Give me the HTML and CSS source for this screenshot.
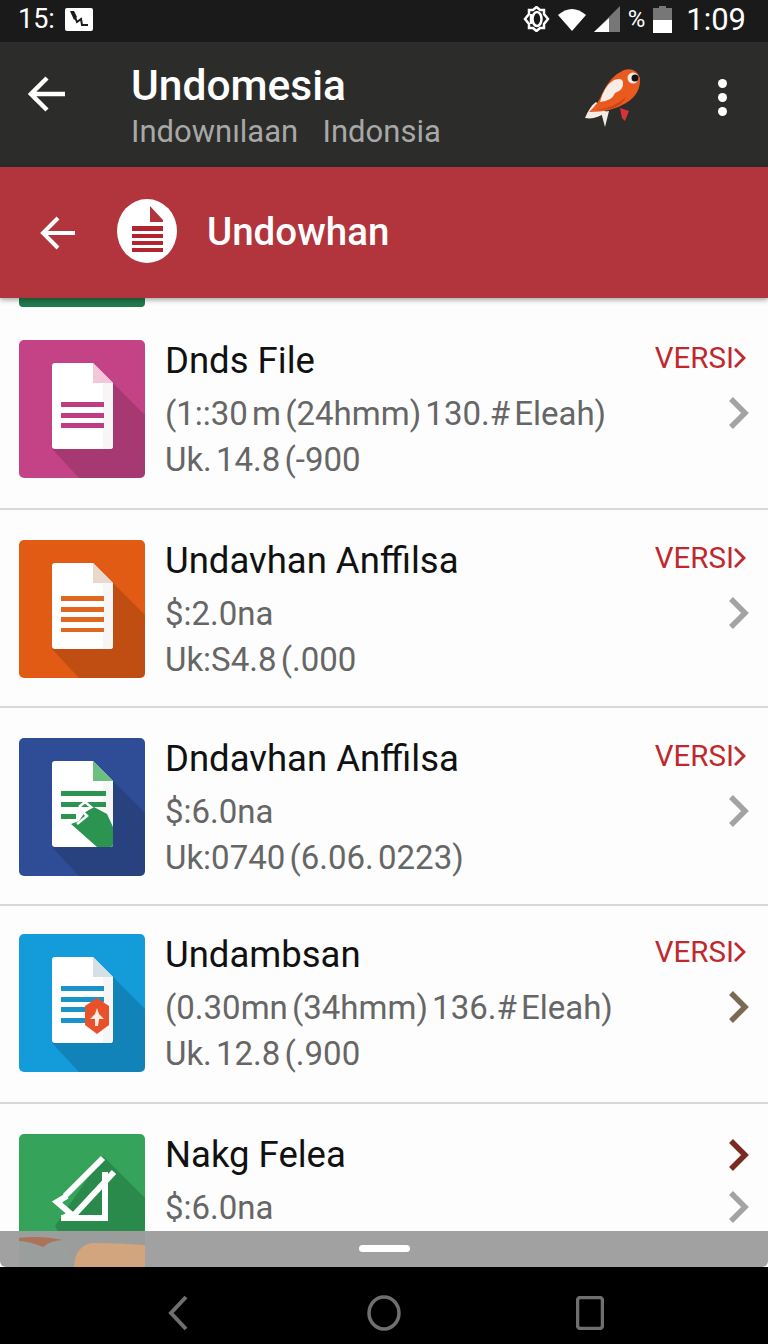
FILE: index.html
```html
<!DOCTYPE html>
<html lang="en">
<head>
    <meta charset="UTF-8">
    <meta name="viewport" content="width=device-width, initial-scale=1.0">
    <title>Undomesia</title>
    <link rel="stylesheet" href="styles.css">
</head>
<body>
    <svg class="defs" width="0" height="0">
        <defs>
            <symbol id="doc-page" viewBox="0 0 126 138">
                <path d="M94 43 L126 75 V134 a4 4 0 0 1 -4 4 H60 L33 109 Z" fill="#000" fill-opacity=".15"/>
                <path d="M36 23 H74 L94 43 V106 a3 3 0 0 1 -3 3 H36 a3 3 0 0 1 -3 -3 V26 a3 3 0 0 1 3 -3 Z" fill="#fff"/>
                <path d="M84 43 H94 V106 a3 3 0 0 1 -3 3 H84 Z" fill="#f6f6f6"/>
            </symbol>
            <symbol id="chev" viewBox="0 0 22 34">
                <path d="M4 3 L18 17 L4 31" fill="none" stroke="currentColor" stroke-width="5.5"/>
            </symbol>
        </defs>
    </svg>

    <div class="status-bar">
        <div class="status-left">
            <span>15:</span>
            <svg width="28" height="23" viewBox="0 0 28 23">
                <rect width="28" height="23" rx="2" fill="#fff"/>
                <path d="M8 4 L12 14 L16 11 L17 17 H23" fill="none" stroke="#1a1a1a" stroke-width="2"/>
                <path d="M5 3 H9 L12 9 L9 12 Z" fill="#1a1a1a"/>
            </svg>
        </div>
        <div class="status-right">
            <svg width="27" height="26" viewBox="0 0 27 26">
                <path d="M13.500 1 L17 4 H21 V8 L25 13 L21 18 V22 H17 L13.500 25 L10 22 H6 V18 L2 13 L6 8 V4 H10 Z" fill="none" stroke="#fff" stroke-width="2.500"/>
                <ellipse cx="14" cy="13" rx="4.500" ry="7" fill="none" stroke="#fff" stroke-width="2.500"/>
                <path d="M8 8 V18" stroke="#fff" stroke-width="2.500"/>
            </svg>
            <svg width="28" height="24" viewBox="0 0 28 24">
                <path d="M0 8 Q14 -4 28 8 L14 24 Z" fill="#fff"/>
            </svg>
            <svg width="26" height="26" viewBox="0 0 26 26">
                <path d="M26 0 V26 H0 Z" fill="#777"/>
                <path d="M15 12 V26 H0 Z" fill="#fff"/>
            </svg>
            <span class="status-pct">%</span>
            <svg width="19" height="27" viewBox="0 0 19 27">
                <path d="M6 0 H13 V2 H19 V27 H0 V2 H6 Z" fill="#777"/>
                <rect y="14" width="19" height="13" fill="#fff"/>
            </svg>
            <span class="status-time">1:09</span>
        </div>
    </div>

    <header class="app-bar">
        <svg class="app-back" width="38" height="36" viewBox="0 0 38 36">
            <path d="M19 2 L3 18 L19 34 M3 18 H37" fill="none" stroke="#fff" stroke-width="4.500"/>
        </svg>
        <div class="app-titles">
            <div class="app-title">Undomesia</div>
            <div class="app-sub">Indownılaan  Indonsia</div>
        </div>
        <svg class="fish" width="58" height="60" viewBox="0 0 58 60">
            <path d="M1 50 Q6 38 12 34 L22 44 Q12 52 1 50 Z" fill="#f4ebe4"/>
            <path d="M17 44 L21 59 L25 43 Z" fill="#f4ebe4"/>
            <path d="M36 40 L45 43 L41 53 L38 50 Z" fill="#d8323a"/>
            <path d="M5 44 Q14 36 18 26 Q26 8 40 2 Q52 -1 56 10 Q57 26 42 35 Q28 44 5 44 Z" fill="#ea5a1e"/>
            <path d="M16 34 Q20 18 30 12 Q38 9 39 14 Q40 22 31 25 Q28 33 16 34 Z" fill="#f7ede6"/>
            <path d="M12 42 Q30 40 42 29 Q36 42 12 42 Z" fill="#c9431a"/>
            <circle cx="49" cy="10" r="5.500" fill="#f7ede6"/>
            <circle cx="51" cy="10" r="3.500" fill="#111"/>
        </svg>
        <div class="dots"><i></i><i></i><i></i></div>
    </header>

    <div class="sub-bar">
        <svg class="sub-back" width="36" height="34" viewBox="0 0 36 34">
            <path d="M18 2 L3 17 L18 32 M3 17 H35" fill="none" stroke="#fff" stroke-width="4"/>
        </svg>
        <svg class="sub-icon" width="60" height="64" viewBox="0 0 60 64">
            <ellipse cx="30" cy="32" rx="30" ry="32" fill="#fff"/>
            <path d="M33 7 L46 21 V23 H33 Z" fill="#b2343c"/>
            <path d="M15 27 H46 V32 H15 Z M15 35 H46 V39 H15 Z M15 42 H46 V46 H15 Z M15 49 H46 V53 H15 Z" fill="#b2242e"/>
        </svg>
        <div class="sub-title">Undowhan</div>
    </div>

    <main class="list">
        <div class="peek"></div>

        <div class="row row-tight">
            <svg class="thumb" width="126" height="138" viewBox="0 0 126 138">
                <rect width="126" height="138" rx="5" fill="#c44387"/>
                <use href="#doc-page"/>
                <path d="M74 23 L94 43 H74 Z" fill="#f3c6da"/>
                <path d="M42 62 H85 V67 H42 Z M42 73 H85 V78 H42 Z M42 83 H85 V88 H42 Z" fill="#c03c82"/>
            </svg>
            <div class="info">
                <div class="name">Dnds File</div>
                <div class="line">(1::30 m (24hmm) 130.# Eleah)</div>
                <div class="line">Uk. 14.8 (-900</div>
            </div>
            <div class="side">
                <div class="versi">VERSI<svg width="12" height="22" viewBox="0 0 12 22"><path d="M1 2 L10 11 L1 20" fill="none" stroke="currentColor" stroke-width="2.800"/></svg></div>
                <svg class="go" width="22" height="34"><use href="#chev"/></svg>
            </div>
        </div>

        <div class="row">
            <svg class="thumb" width="126" height="138" viewBox="0 0 126 138">
                <rect width="126" height="138" rx="5" fill="#e25b14"/>
                <use href="#doc-page"/>
                <path d="M74 23 L94 43 H74 Z" fill="#e9d8ce"/>
                <path d="M42 56 H85 V61 H42 Z M42 67 H85 V72 H42 Z M42 77 H85 V82 H42 Z M42 88 H85 V92 H42 Z" fill="#e0671f"/>
            </svg>
            <div class="info">
                <div class="name">Undavhan Anffilsa</div>
                <div class="line">$:2.0na</div>
                <div class="line">Uk:S4.8 (.000</div>
            </div>
            <div class="side">
                <div class="versi">VERSI<svg width="12" height="22" viewBox="0 0 12 22"><path d="M1 2 L10 11 L1 20" fill="none" stroke="currentColor" stroke-width="2.800"/></svg></div>
                <svg class="go" width="22" height="34"><use href="#chev"/></svg>
            </div>
        </div>

        <div class="row">
            <svg class="thumb" width="126" height="138" viewBox="0 0 126 138">
                <rect width="126" height="138" rx="5" fill="#2f4d96"/>
                <use href="#doc-page"/>
                <path d="M74 23 L94 43 H74 Z" fill="#6cc07f"/>
                <path d="M42 53 H87 V58 H42 Z M42 64 H87 V69 H42 Z M42 76 H57 V81 H42 Z" fill="#2a9450"/>
                <path d="M52 86 L60 83 L66 74 L75 69 L88 76 L94 89 V106 a3 3 0 0 1 -3 3 H78 Z" fill="#2a9450"/>
                <path d="M60 69 L66 64 L72 69 L64 74 L68 78 L58 86" fill="none" stroke="#fff" stroke-width="2.500"/>
            </svg>
            <div class="info">
                <div class="name">Dndavhan Anffilsa</div>
                <div class="line">$:6.0na</div>
                <div class="line">Uk:0740 (6.06. 0223)</div>
            </div>
            <div class="side">
                <div class="versi">VERSI<svg width="12" height="22" viewBox="0 0 12 22"><path d="M1 2 L10 11 L1 20" fill="none" stroke="currentColor" stroke-width="2.800"/></svg></div>
                <svg class="go" width="22" height="34"><use href="#chev"/></svg>
            </div>
        </div>

        <div class="row row-tight">
            <svg class="thumb" width="126" height="138" viewBox="0 0 126 138">
                <rect width="126" height="138" rx="5" fill="#149bd9"/>
                <use href="#doc-page"/>
                <path d="M74 23 L94 43 H74 Z" fill="#d5dfe8"/>
                <path d="M42 52 H85 V57 H42 Z M42 63 H85 V68 H42 Z M42 73 H68 V78 H42 Z M42 84 H68 V89 H42 Z" fill="#1a94c8"/>
                <path d="M78 64 L90 72 V91 L78 100 L66 91 V72 Z" fill="#e8512a"/>
                <path d="M78 74 L80 80 L85 85 H80 L79 92 H76 L76 85 H71 L76 80 Z" fill="#fbeee6"/>
            </svg>
            <div class="info">
                <div class="name">Undambsan</div>
                <div class="line">(0.30mn (34hmm) 136.# Eleah)</div>
                <div class="line">Uk. 12.8 (.900</div>
            </div>
            <div class="side">
                <div class="versi">VERSI<svg width="12" height="22" viewBox="0 0 12 22"><path d="M1 2 L10 11 L1 20" fill="none" stroke="currentColor" stroke-width="2.800"/></svg></div>
                <svg class="go go-brown" width="22" height="34"><use href="#chev"/></svg>
            </div>
        </div>

        <div class="row">
            <svg class="thumb" width="126" height="138" viewBox="0 0 126 138">
                <rect width="126" height="138" rx="5" fill="#35a35a"/>
                <path d="M84 22 L126 64 V138 H60 L36 92 Z" fill="#2a8a4c"/>
                <path d="M84 24 L46 62 M95 38 L56 80 M86 38 V84 H42 M48 62 L38 68 L52 80 L44 84" fill="none" stroke="#fff" stroke-width="6"/>
            </svg>
            <div class="info">
                <div class="name">Nakg Felea</div>
                <div class="line">$:6.0na</div>
            </div>
            <div class="side">
                <div class="side-top"><svg class="go go-red" width="22" height="34"><use href="#chev"/></svg></div>
                <svg class="go go-low" width="22" height="34"><use href="#chev"/></svg>
            </div>
        </div>

        <div class="sheet">
            <svg class="sheet-art" width="126" height="36" viewBox="0 0 126 36">
                <path d="M0 7 Q20 4 44 9 Q30 10 24 16 Q10 10 0 10 Z" fill="#b06a48"/>
                <path d="M55 36 Q56 14 74 12 Q100 12 126 14 V36 Z" fill="#e0a878"/>
            </svg>
            <div class="handle"></div>
        </div>
    </main>

    <nav class="nav-bar">
        <svg width="22" height="36" viewBox="0 0 22 36">
            <path d="M19 2 L4 18 L19 34" fill="none" stroke="#6f6f6f" stroke-width="4"/>
        </svg>
        <svg width="34" height="36" viewBox="0 0 34 36">
            <ellipse cx="17" cy="18" rx="15" ry="16" fill="none" stroke="#6f6f6f" stroke-width="3.500"/>
        </svg>
        <svg width="28" height="34" viewBox="0 0 28 34">
            <rect x="1.500" y="1.500" width="25" height="31" rx="3" fill="none" stroke="#6f6f6f" stroke-width="3.500"/>
        </svg>
    </nav>
</body>
</html>
```

FILE: styles.css
```css
* {
    box-sizing: border-box;
}
html, body {
    margin: 0;
    padding: 0;
}
body {
    width: 768px;
    height: 1344px;
    display: flex;
    flex-direction: column;
    overflow: hidden;
    font-family: "Roboto", "Liberation Sans", sans-serif;
    background-color: #000;
}
.defs {
    display: none;
}

/* status bar */
.status-bar {
    height: 42px;
    flex: none;
    display: flex;
    align-items: center;
    justify-content: space-between;
    padding: 0 22px 4px 18px;
    background-color: #1a1a1a;
    color: #fff;
    font-size: 27px;
}
.status-left {
    display: flex;
    align-items: center;
    gap: 10px;
}
.status-right {
    display: flex;
    align-items: center;
    gap: 8px;
}
.status-pct {
    font-size: 24px;
}
.status-time {
    margin-left: 6px;
    font-size: 31px;
}

/* top bars */
.app-bar {
    height: 125px;
    flex: none;
    display: flex;
    align-items: flex-start;
    padding: 0 0 0 28px;
    background-color: #2c2c2a;
}
.app-back {
    flex: none;
    margin-top: 34px;
}
.app-titles {
    margin-left: 65px;
    flex: 1;
    margin-top: 20px;
}
.app-title {
    font-size: 42.5px;
    line-height: 48px;
    font-weight: 500;
    color: #fff;
}
.app-sub {
    font-size: 31px;
    line-height: 44px;
    word-spacing: 4.5px;
    color: #a8a8a8;
    white-space: pre;
}
.fish {
    flex: none;
    margin-top: 26px;
}
.dots {
    width: 9px;
    margin: 37px 41px 0 76px;
    display: flex;
    flex-direction: column;
    gap: 5px;
}
.dots i {
    display: block;
    width: 9px;
    height: 9px;
    border-radius: 50%;
    background-color: #fff;
}
.sub-bar {
    height: 131px;
    flex: none;
    display: flex;
    align-items: center;
    padding-left: 40px;
    background-color: #b2343c;
    box-shadow: 0 2px 5px rgba(0, 0, 0, 0.35);
    position: relative;
    z-index: 1;
}
.sub-icon {
    margin-left: 41px;
    margin-top: -3px;
}
.sub-title {
    margin-left: 30px;
    margin-top: -3px;
    font-size: 38.5px;
    font-weight: 500;
    color: #fff;
}

/* list */
.list {
    flex: 1;
    position: relative;
    overflow: hidden;
    background-color: #fdfdfd;
}
.peek {
    width: 126px;
    height: 9px;
    margin: 0 0 5px 19px;
    background-color: #1f7a4c;
    border-radius: 0 0 4px 4px;
}
.row {
    height: 198px;
    padding: 30px 19px 0 19px;
    display: flex;
    align-items: flex-start;
    border-bottom: 2px solid #d8d8d8;
}
.row-tight {
    padding-top: 28px;
}
.thumb {
    flex: none;
}
.info {
    flex: 1;
    margin-left: 20px;
    white-space: nowrap;
}
.name {
    height: 42px;
    font-size: 36.5px;
    line-height: 42px;
    color: #111;
    margin-bottom: 9px;
}
.line {
    height: 46px;
    font-size: 33px;
    line-height: 46px;
    word-spacing: -4px;
    color: #666;
}
.side {
    flex: none;
    display: flex;
    flex-direction: column;
    align-items: flex-end;
}
.versi {
    height: 36px;
    margin-right: 3px;
    display: flex;
    align-items: center;
    font-size: 29.5px;
    color: #c0282c;
}
.side-top {
    height: 42px;
    display: flex;
    align-items: center;
}
.go {
    margin-top: 20px;
    color: #a3a3a3;
}
.side-top .go {
    margin-top: 0;
}
.go-low {
    margin-top: 14px;
}
.go-brown {
    color: #7a6a55;
}
.go-red {
    color: #7a2a22;
}

/* bottom sheet over the list */
.sheet {
    position: absolute;
    left: 0;
    right: 0;
    bottom: 0;
    height: 36px;
    display: flex;
    justify-content: center;
    padding-top: 14px;
    background-color: rgba(158, 158, 158, 0.97);
    border-radius: 0 0 6px 6px;
}
.sheet-art {
    position: absolute;
    left: 19px;
    top: 0;
    opacity: 0.8;
}
.handle {
    width: 51px;
    height: 7px;
    border-radius: 4px;
    background-color: #fff;
    position: relative;
}
.nav-bar {
    height: 77px;
    flex: none;
    background-color: #000;
    display: grid;
    grid-template-columns: 34px 34px 34px;
    justify-content: space-between;
    align-items: center;
    justify-items: center;
    padding: 14px 161px 0 161px;
}
```
